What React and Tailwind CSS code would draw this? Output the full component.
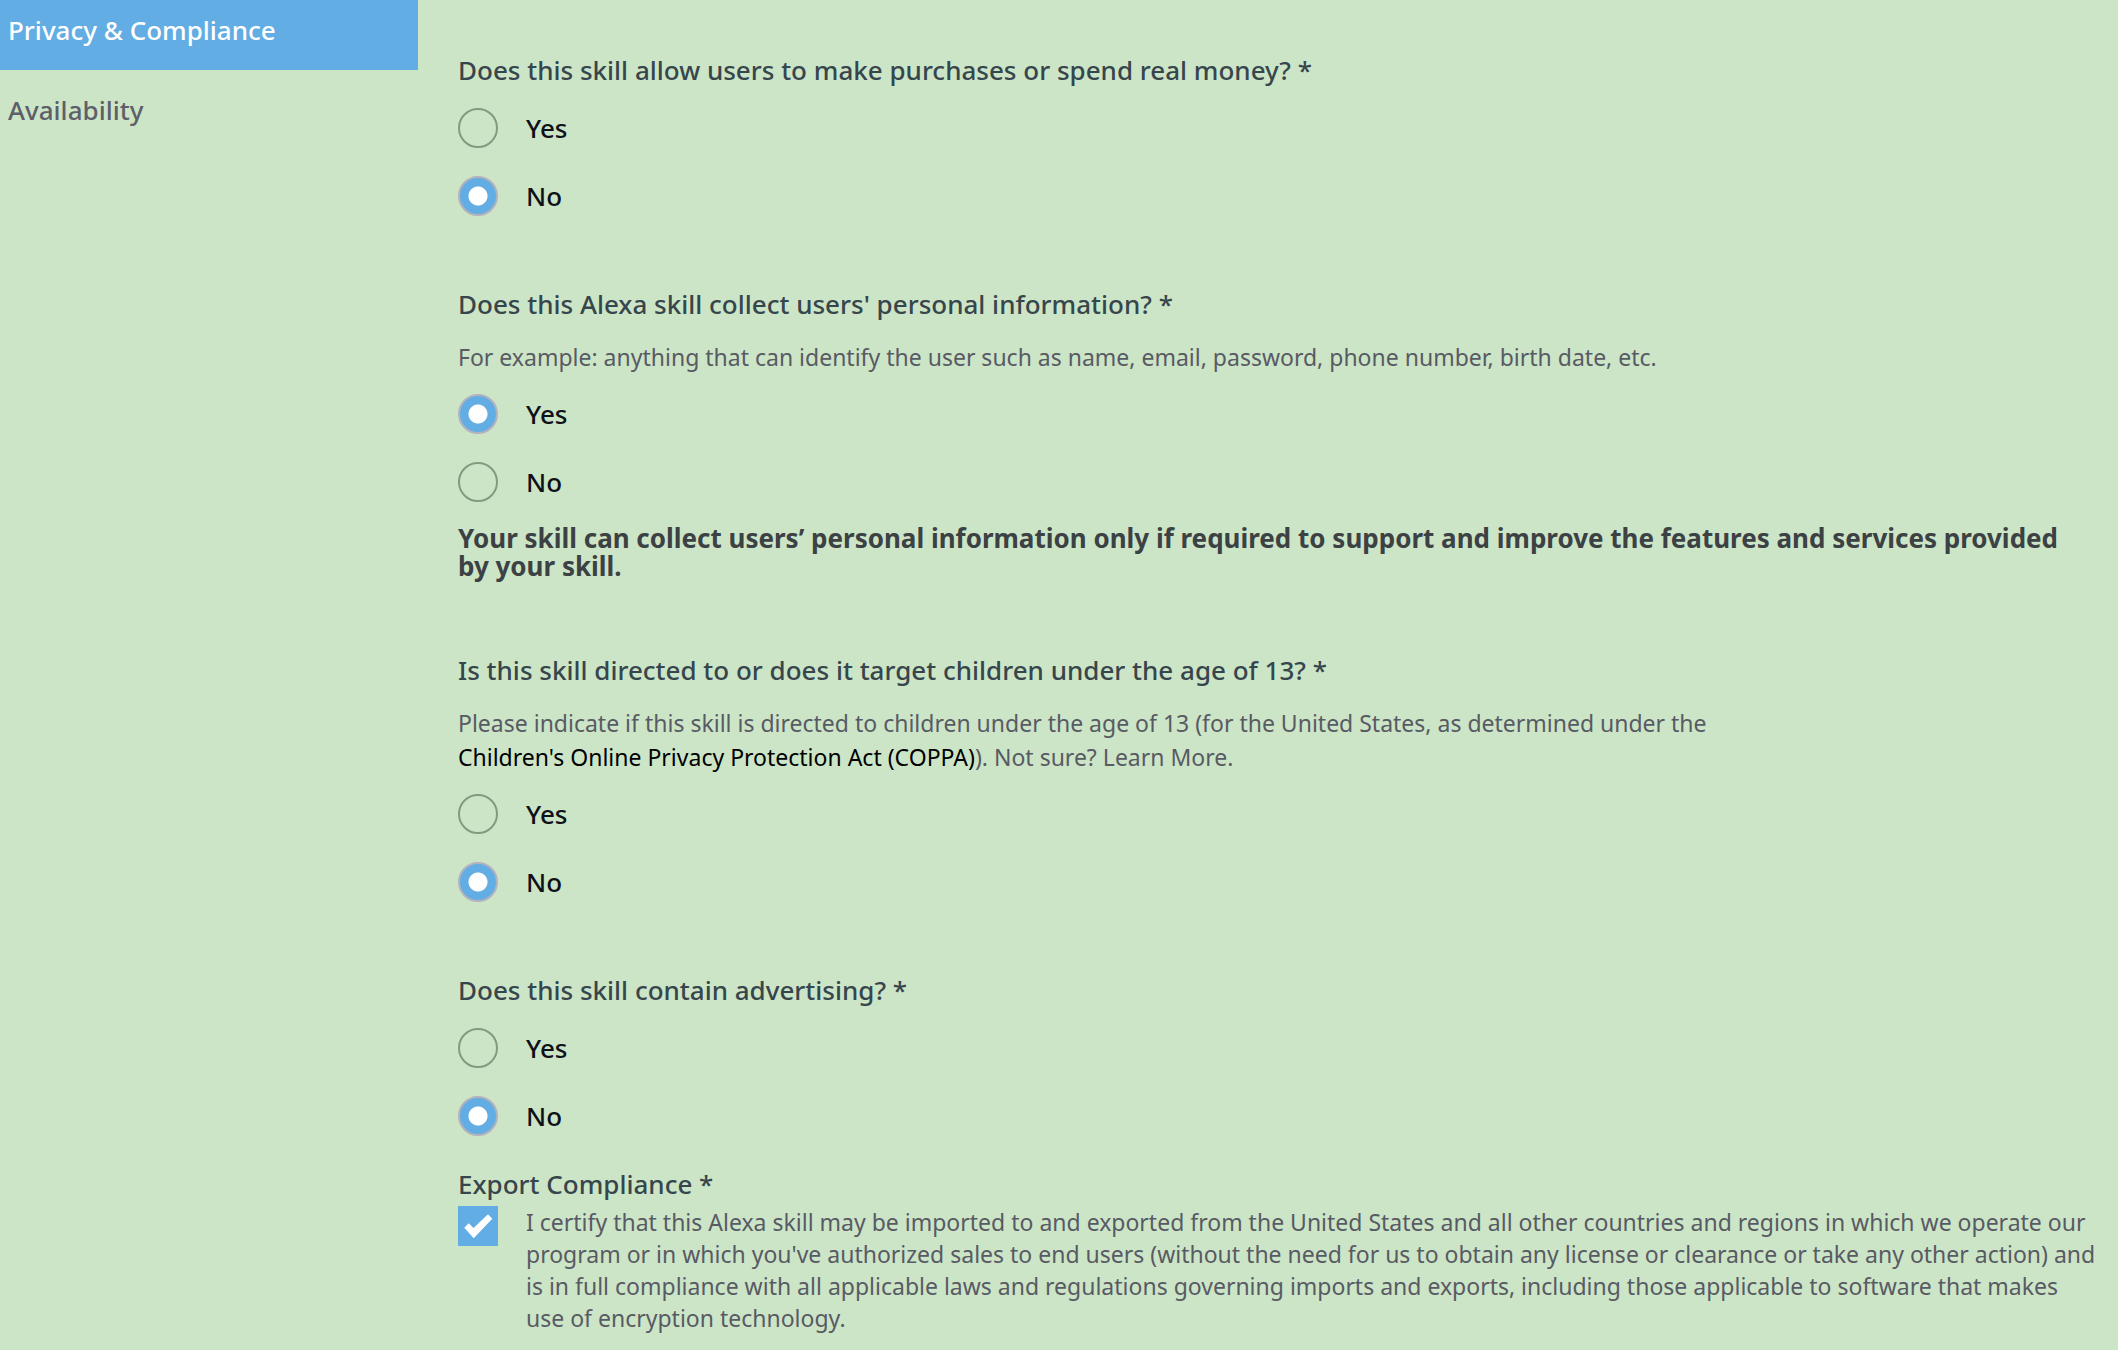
import { useState } from "react";

function NavItem({ children, active }) {
  return (
    <a
      href="#"
      aria-current={active ? "page" : undefined}
      className={
        active
          ? "block bg-[#62ade3] px-2 pt-3.5 pb-6 text-white"
          : "block px-2 py-6 text-[#5d5f69]"
      }
    >
      {children}
    </a>
  );
}

function Choice({ name, label, checked, onChange }) {
  return (
    <label className="flex w-fit items-center gap-7 text-[#0f1118]">
      <input
        type="radio"
        name={name}
        checked={checked}
        onChange={onChange}
        className="size-10 appearance-none rounded-full border-2 border-[#839a80] checked:border-[#b3b3bf] checked:bg-[#62ade3] checked:bg-[radial-gradient(circle,#ffffff_9px,#62ade3_10px)]"
      />
      {label}
    </label>
  );
}

function Question({ name, title, hint, initial, note }) {
  const [value, setValue] = useState(initial);
  return (
    <fieldset>
      <legend className="text-[#37454c]">{title} *</legend>
      {hint && (
        <p className="mt-5 max-w-[1320px] text-[23px] leading-[34px] font-normal text-[#585a64]">
          {hint}
        </p>
      )}
      <div className={hint ? "mt-5 flex flex-col gap-7" : "mt-[22px] flex flex-col gap-7"}>
        {["Yes", "No"].map((option) => (
          <Choice
            key={option}
            name={name}
            label={option}
            checked={value === option}
            onChange={() => setValue(option)}
          />
        ))}
      </div>
      {note && (
        <p className="mt-[22px] pr-6 pb-0.5 leading-7 font-bold text-[#3c4144]">{note}</p>
      )}
    </fieldset>
  );
}

export default function App() {
  const [certified, setCertified] = useState(true);
  return (
    <div className="flex min-h-screen bg-[#cce5c7] font-['Noto_Sans',sans-serif] text-[26px] leading-8 font-medium">
      <nav className="w-[418px] shrink-0">
        <NavItem active>Privacy &amp; Compliance</NavItem>
        <NavItem>Availability</NavItem>
      </nav>
      <main className="min-w-0 flex-1 pt-[54px] pl-10">
        <form>
          <div className="flex flex-col gap-[72px]">
            <Question
              name="purchases"
              title="Does this skill allow users to make purchases or spend real money?"
              initial="No"
            />
            <Question
              name="personal"
              title="Does this Alexa skill collect users' personal information?"
              hint="For example: anything that can identify the user such as name, email, password, phone number, birth date, etc."
              initial="Yes"
              note="Your skill can collect users’ personal information only if required to support and improve the features and services provided by your skill."
            />
            <Question
              name="children"
              title="Is this skill directed to or does it target children under the age of 13?"
              hint={
                <>
                  Please indicate if this skill is directed to children under the age of 13 (for the
                  United States, as determined under the{" "}
                  <a href="#" className="text-black">
                    Children's Online Privacy Protection Act (COPPA)
                  </a>
                  ). Not sure? <a href="#">Learn More.</a>
                </>
              }
              initial="No"
            />
            <Question
              name="advertising"
              title="Does this skill contain advertising?"
              initial="No"
            />
          </div>
          <fieldset className="mt-8">
            <legend className="text-[#37454c]">Export Compliance *</legend>
            <div className="mt-1.5 flex items-start gap-7 pr-4">
              <span className="relative size-10 shrink-0">
                <input
                  id="certify"
                  type="checkbox"
                  checked={certified}
                  onChange={(e) => setCertified(e.target.checked)}
                  className="block size-10 appearance-none border-2 border-[#839a80] checked:border-[#62ade3] checked:bg-[#62ade3]"
                />
                {certified && (
                  <svg
                    viewBox="0 0 40 40"
                    aria-hidden="true"
                    className="pointer-events-none absolute inset-0 size-10 fill-white"
                  >
                    <path d="M6.3 21.7 10.7 17.3 15.5 22.1 30 8.3 34.3 12.7 15.7 32.3Z" />
                  </svg>
                )}
              </span>
              <label
                htmlFor="certify"
                className="text-[23px] leading-8 font-normal text-[#585a64]"
              >
                I certify that this Alexa skill may be imported to and exported from the United
                States and all other countries and regions in which we operate our program or in
                which you've authorized sales to end users (without the need for us to obtain any
                license or clearance or take any other action) and is in full compliance with all
                applicable laws and regulations governing imports and exports, including those
                applicable to software that makes use of encryption technology.
              </label>
            </div>
          </fieldset>
        </form>
      </main>
    </div>
  );
}
